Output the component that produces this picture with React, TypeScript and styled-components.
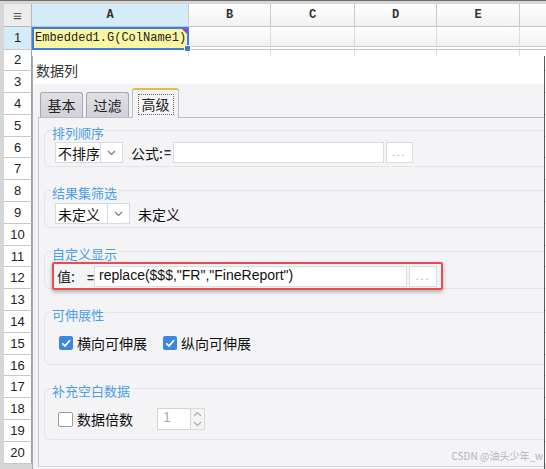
import React from 'react';
import styled, { createGlobalStyle } from 'styled-components';

const CJK = `"Noto Sans CJK SC", "Liberation Sans", sans-serif`;
const LATIN = `"Liberation Sans", "Noto Sans CJK SC", sans-serif`;

const GlobalStyle = createGlobalStyle`
  html, body { margin: 0; padding: 0; background: #fff; }
  #root { width: 546px; height: 469px; }
`;

// --- Spreadsheet behind the dialog ---

const Frame = styled.div`
  position: relative;
  width: 546px;
  height: 469px;
  overflow: hidden;
  box-sizing: border-box;
  background: #d6d6d6;
  border-top: 1px solid #6e6e6e;
  padding: 3px 0 0 4px;
`;

const Sheet = styled.div`
  display: grid;
  grid-template-columns: 28px 157px 82px 84px 82px 83px 83px;
  grid-template-rows: 23px 22.5px repeat(19, 21.8px);
  background: #fff;
`;

const Corner = styled.div`
  box-sizing: border-box;
  display: flex;
  align-items: center;
  justify-content: center;
  background: #ececec;
  border-right: 1px solid #b8b8b8;
  border-bottom: 1px solid #b8b8b8;
  color: #555;
  font: 15px ${LATIN};
`;

const ColHead = styled.div<{ $active?: boolean }>`
  box-sizing: border-box;
  display: flex;
  align-items: center;
  justify-content: center;
  background: ${(p) => (p.$active ? '#d3ecf8' : 'linear-gradient(#ffffff, #f2f2f2)')};
  border-right: 1px solid #cfcabf;
  border-bottom: 1px solid #c4c4c4;
  color: #333;
  font: bold 12px "Liberation Mono", monospace;
`;

const RowHead = styled.div<{ $active?: boolean }>`
  box-sizing: border-box;
  display: flex;
  align-items: center;
  justify-content: center;
  background: ${(p) => (p.$active ? '#d3ecf8' : '#ffffff')};
  border-right: 1px solid #9e9e9e;
  border-bottom: 1px solid #c8c8c8;
  color: #222;
  font: 13px ${LATIN};
`;

const Cell = styled.div<{ $first?: boolean }>`
  box-sizing: border-box;
  background: ${(p) => (p.$first ? 'linear-gradient(#ffffff, #f1f1f1)' : '#ffffff')};
  border-right: 1px solid #dcdcdc;
  border-bottom: ${(p) => (p.$first ? '4px double #c8c8c8' : '1px solid #dcdcdc')};
`;

const SelectedCell = styled.div`
  position: relative;
  box-sizing: border-box;
  display: flex;
  align-items: center;
  background: #fbf6a2;
  border: 2px solid #3a7fde;
  padding-left: 1px;
  color: #222;
  font: 12px "Liberation Mono", monospace;
  white-space: nowrap;
`;

const FillHandle = styled.span`
  position: absolute;
  right: -4px;
  bottom: -4px;
  width: 5px;
  height: 5px;
  background: #3a7fde;
  border: 1px solid #fff;
`;

const CornerMark = styled.span`
  position: absolute;
  right: 0;
  top: 0;
  width: 0;
  height: 0;
  border-top: 5px solid #c02ccf;
  border-left: 5px solid transparent;
`;

// --- Dialog ---

const Dialog = styled.div`
  position: absolute;
  left: 32px;
  top: 55px;
  right: 1px;
  bottom: 0;
  display: flex;
  flex-direction: column;
  overflow: hidden;
  background: #f3f3f6;
  border-left: 1px solid #a9a9a9;
  border-right: 1px solid #5a5a5a;
`;

const TitleBar = styled.div`
  box-sizing: border-box;
  height: 28px;
  line-height: 24px;
  padding: 4px 0 0 3px;
  background: #fff;
  color: #333;
  font: 14px ${CJK};
`;

const Body = styled.div`
  flex: 1;
  display: flex;
  flex-direction: column;
  padding: 0 0 1px 5px;
`;

const TabStrip = styled.div`
  height: 33px;
  display: flex;
  align-items: flex-end;
  gap: 3px;
  padding-left: 2px;
`;

const Tab = styled.div<{ $active?: boolean; $w: number }>`
  position: relative;
  z-index: 1;
  box-sizing: border-box;
  width: ${(p) => p.$w}px;
  height: ${(p) => (p.$active ? 30 : 25)}px;
  margin-bottom: ${(p) => (p.$active ? -1 : 0)}px;
  display: flex;
  align-items: center;
  justify-content: center;
  border: 1px solid ${(p) => (p.$active ? '#b7c0d0' : '#a7a7ae')};
  border-top: ${(p) => (p.$active ? '2px solid #e9b94a' : '1px solid #a7a7ae')};
  border-bottom: none;
  border-radius: 3px 3px 0 0;
  background: ${(p) => (p.$active ? '#f4f4f7' : 'linear-gradient(#dfdfe4, #d1d1d7)')};
  color: #222;
  font: 14px ${CJK};
`;

const FocusRing = styled.span`
  padding: 0 3px;
  line-height: 19px;
  border: 1px dotted #6d6d6d;
`;

const Panel = styled.div`
  flex: 1;
  display: flex;
  flex-direction: column;
  gap: 23px;
  padding: 12px 0 0 5px;
  background: #f4f4f7;
  border-top: 1px solid #b5bfd0;
  border-left: 1px solid #c6c6cd;
  border-bottom: 1px solid #d8d8dc;
  margin-bottom: 1px;
`;

const Group = styled.div<{ $h: number }>`
  box-sizing: border-box;
  height: ${(p) => p.$h}px;
  margin-right: -10px;
  display: flex;
  flex-direction: column;
  border: 1px solid #e4e4e9;
  border-radius: 6px;
`;

const Legend = styled.span`
  align-self: flex-start;
  height: 16px;
  line-height: 16px;
  margin: -8px 0 0 6px;
  padding: 0 1px;
  background: #f4f4f7;
  color: #4c9de8;
  font: 13px ${CJK};
`;

const Row = styled.div<{ $top: number; $left: number; $gap?: number }>`
  display: flex;
  align-items: center;
  margin-top: ${(p) => p.$top}px;
  padding-left: ${(p) => p.$left}px;
  gap: ${(p) => p.$gap ?? 0}px;
  color: #111;
  font: 14px ${CJK};
`;

const Combo = styled.div<{ $w: number }>`
  box-sizing: border-box;
  width: ${(p) => p.$w}px;
  height: 21px;
  display: flex;
  background: #fff;
  border: 1px solid #dadade;
`;

const ComboText = styled.span`
  flex: 1;
  padding-left: 2px;
  line-height: 19px;
  font: 14px ${CJK};
  color: #111;
`;

const ComboArrow = styled.span`
  width: 21px;
  display: flex;
  align-items: center;
  justify-content: center;
  border-left: 1px solid #dadade;
`;

const Label = styled.span<{ $ml?: number }>`
  margin-left: ${(p) => p.$ml ?? 0}px;
  white-space: nowrap;
`;

const Eq = styled.span<{ $ml?: number }>`
  margin: 0 2px 0 ${(p) => p.$ml ?? 1}px;
  font: bold 12px ${LATIN};
  color: #333;
`;

const TextInput = styled.div<{ $w: number }>`
  box-sizing: border-box;
  width: ${(p) => p.$w}px;
  height: 21px;
  padding-left: 4px;
  background: #fff;
  border: 1px solid #dcdcdc;
  line-height: 19px;
  font: 14px ${LATIN};
  color: #111;
  white-space: nowrap;
`;

const DotButton = styled.div<{ $w: number }>`
  box-sizing: border-box;
  width: ${(p) => p.$w}px;
  height: 21px;
  margin-left: 2px;
  display: flex;
  align-items: flex-end;
  justify-content: center;
  padding-bottom: 5px;
  background: #fff;
  border: 1px solid #dcdcdc;
  color: #9a9a9a;
  font: 10px ${LATIN};
  letter-spacing: 2px;
  line-height: 8px;
`;

const Highlight = styled.div`
  box-sizing: border-box;
  width: 391px;
  height: 28px;
  margin-left: 7px;
  display: flex;
  align-items: center;
  padding: 0 1px 0 3px;
  border: 2px solid #ea4a50;
  border-radius: 2px;
  box-shadow: 0 2px 4px rgba(0, 0, 0, 0.3);
  color: #222;
  font: 14px ${CJK};
`;

const ValueLabel = styled.span`
  width: 37px;
  white-space: nowrap;
`;

const Check = styled.span<{ $on?: boolean }>`
  box-sizing: border-box;
  width: ${(p) => (p.$on ? 14 : 15)}px;
  height: ${(p) => (p.$on ? 14 : 15)}px;
  display: inline-flex;
  align-items: center;
  justify-content: center;
  border-radius: 2px;
  background: ${(p) => (p.$on ? '#3b87e0' : '#fff')};
  border: ${(p) => (p.$on ? 'none' : '1px solid #9c9c9c')};
  margin-right: 4px;
`;

const CheckItem = styled.span`
  display: inline-flex;
  align-items: center;
`;

const Spinner = styled.div`
  display: flex;
  margin-left: 24px;
`;

const SpinInput = styled.div`
  box-sizing: border-box;
  width: 34px;
  height: 22px;
  padding-left: 5px;
  background: #fff;
  border: 1px solid #d4d4d4;
  line-height: 20px;
  color: #aaa;
  font: 14px ${LATIN};
`;

const SpinArrows = styled.div`
  display: flex;
  flex-direction: column;
  width: 14px;
  height: 22px;
  border: 1px solid #dcdcdc;
  border-left: none;
  box-sizing: border-box;
`;

const SpinHalf = styled.span`
  flex: 1;
  display: flex;
  align-items: center;
  justify-content: center;
`;

const Watermark = styled.span`
  position: absolute;
  right: 3px;
  bottom: 6px;
  color: #b3b3bb;
  font: 10px ${CJK};
`;

// --- Small drawings ---

const Chevron = ({ up, color = '#777' }: { up?: boolean; color?: string }) => (
  <svg width="9" height="6" viewBox="0 0 9 6">
    <path d={up ? 'M1 5 L4.5 1.5 L8 5' : 'M1 1 L4.5 4.5 L8 1'} fill="none" stroke={color} strokeWidth="1.1" />
  </svg>
);

const Tick = () => (
  <svg width="12" height="12" viewBox="0 0 12 12">
    <path d="M2.2 6.3 L5 9 L10 3.2" fill="none" stroke="#fff" strokeWidth="1.8" />
  </svg>
);

// the sixth column runs off the right edge, so its letter is not shown
const COLS = ['A', 'B', 'C', 'D', 'E', ''];

export default function App() {
  const rows = Array.from({ length: 20 }, (_, i) => i + 1);

  return (
    <>
      <GlobalStyle />
      <Frame>
        <Sheet>
          <Corner>≡</Corner>
          {COLS.map((c, i) => (
            <ColHead key={i} $active={c === 'A'}>{c}</ColHead>
          ))}
          {rows.map((r) => (
            <React.Fragment key={r}>
              <RowHead $active={r === 1}>{r}</RowHead>
              {COLS.map((c, i) =>
                r === 1 && c === 'A' ? (
                  <SelectedCell key={i}>
                    Embedded1.G(ColName1)
                    <CornerMark />
                    <FillHandle />
                  </SelectedCell>
                ) : (
                  <Cell key={i} $first={r === 1} />
                )
              )}
            </React.Fragment>
          ))}
        </Sheet>

        <Dialog>
          <TitleBar>数据列</TitleBar>
          <Body>
            <TabStrip>
              <Tab $w={43}>基本</Tab>
              <Tab $w={43}>过滤</Tab>
              <Tab $w={47} $active>
                <FocusRing>高级</FocusRing>
              </Tab>
            </TabStrip>
            <Panel>
              <Group $h={37}>
                <Legend>排列顺序</Legend>
                <Row $top={3} $left={10}>
                  <Combo $w={68}>
                    <ComboText>不排序</ComboText>
                    <ComboArrow><Chevron /></ComboArrow>
                  </Combo>
                  <Label $ml={8}>公式:</Label>
                  <Eq>=</Eq>
                  <TextInput $w={211} />
                  <DotButton $w={27}>...</DotButton>
                </Row>
              </Group>

              <Group $h={38}>
                <Legend>结果集筛选</Legend>
                <Row $top={4} $left={10}>
                  <Combo $w={75}>
                    <ComboText>未定义</ComboText>
                    <ComboArrow><Chevron /></ComboArrow>
                  </Combo>
                  <Label $ml={8}>未定义</Label>
                </Row>
              </Group>

              <Group $h={38}>
                <Legend>自定义显示</Legend>
                <Row $top={2} $left={0}>
                  <Highlight>
                    <ValueLabel>
                      值:<Eq $ml={12}>=</Eq>
                    </ValueLabel>
                    <TextInput $w={313}>replace($$$,"FR","FineReport")</TextInput>
                    <DotButton $w={28}>...</DotButton>
                  </Highlight>
                </Row>
              </Group>

              <Group $h={53}>
                <Legend>可伸展性</Legend>
                <Row $top={12} $left={14} $gap={16}>
                  <CheckItem>
                    <Check $on><Tick /></Check>
                    横向可伸展
                  </CheckItem>
                  <CheckItem>
                    <Check $on><Tick /></Check>
                    纵向可伸展
                  </CheckItem>
                </Row>
              </Group>

              <Group $h={52}>
                <Legend>补充空白数据</Legend>
                <Row $top={11} $left={13}>
                  <CheckItem>
                    <Check />
                    数据倍数
                  </CheckItem>
                  <Spinner>
                    <SpinInput>1</SpinInput>
                    <SpinArrows>
                      <SpinHalf><Chevron up color="#aaa" /></SpinHalf>
                      <SpinHalf><Chevron color="#aaa" /></SpinHalf>
                    </SpinArrows>
                  </Spinner>
                </Row>
              </Group>
            </Panel>
          </Body>
        </Dialog>
        <Watermark>CSDN @油头少年_w</Watermark>
      </Frame>
    </>
  );
}
